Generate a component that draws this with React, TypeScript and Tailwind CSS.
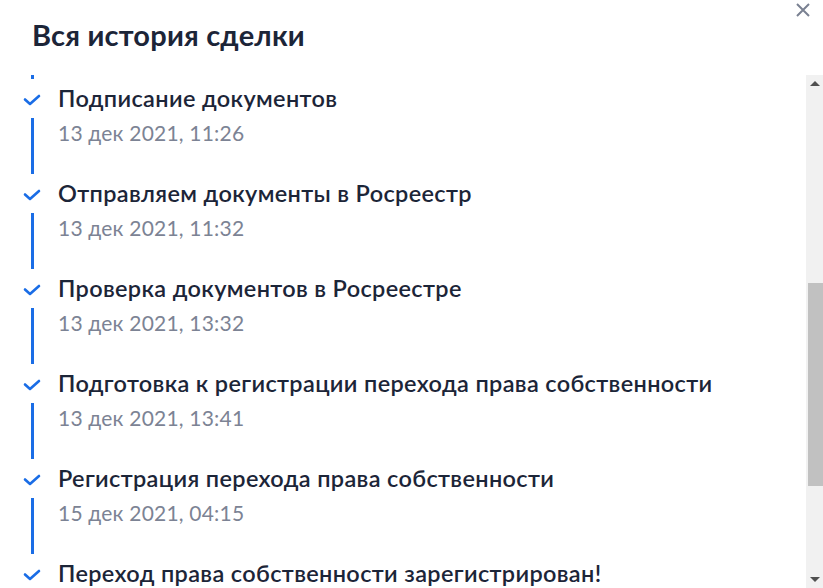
import React from "react";

const steps = [
  { title: "Подписание документов", date: "13 дек 2021, 11:26" },
  { title: "Отправляем документы в Росреестр", date: "13 дек 2021, 11:32" },
  { title: "Проверка документов в Росреестре", date: "13 дек 2021, 13:32" },
  { title: "Подготовка к регистрации перехода права собственности", date: "13 дек 2021, 13:41" },
  { title: "Регистрация перехода права собственности", date: "15 дек 2021, 04:15" },
  { title: "Переход права собственности зарегистрирован!", date: "15 дек 2021, 09:02" },
];

function Check() {
  return (
    <svg width="18" height="12" viewBox="0 0 18 12" fill="none">
      <path d="M2 5.5L7 10L16 2" stroke="#1a6de6" strokeWidth="2.6" strokeLinecap="round" strokeLinejoin="round" />
    </svg>
  );
}

export default function App() {
  return (
    <div className="relative w-[823px] h-[588px] bg-white overflow-hidden font-['Lato',sans-serif]">
      {/* close */}
      <button className="absolute left-[796px] top-[3px] w-[14px] h-[14px]">
        <svg width="14" height="14" viewBox="0 0 14 14">
          <path d="M1 1L13 13M13 1L1 13" stroke="#7a8192" strokeWidth="2" />
        </svg>
      </button>

      <h1 className="pl-[32px] pt-[16px] h-[75px] text-[29px] font-bold text-[#1c2538] leading-[38px] tracking-[0.2px]">
        Вся история сделки
      </h1>

      <div className="flex h-[513px]">
        {/* list */}
        <div className="flex-1 overflow-hidden">
          <div className="ml-[31px] w-[3px] h-[4px] bg-[#1a6de6]" />
          <div className="h-[7px]" />
          {steps.map((s, i) => (
            <div key={i} className="h-[95px]">
              <div className="flex items-center h-[24px]">
                <div className="w-[58px] flex justify-start pl-[23px] pt-[3px]">
                  <Check />
                </div>
                <span className="text-[23.5px] font-semibold text-[#1c2538] leading-[24px] tracking-[0.35px] whitespace-nowrap -mt-[1px]">{s.title}</span>
              </div>
              <div className="flex mt-[8px]">
                <div className="w-[58px]">
                  <div className="ml-[31px] w-[3px] h-[56px] bg-[#1a6de6]" />
                </div>
                <span className="text-[21px] text-[#7c8394] leading-[24px] mt-[3px] tracking-[0.2px]">{s.date}</span>
              </div>
            </div>
          ))}
        </div>

        {/* scrollbar */}
        <div className="w-[17px] bg-[#f1f1f1] flex flex-col items-center relative">
          <div className="h-[17px] w-full flex items-center justify-center">
            <div className="w-0 h-0 border-l-[5px] border-r-[5px] border-b-[5px] border-l-transparent border-r-transparent border-b-[#505050]" />
          </div>
          <div className="mt-[191px] ml-[2px] w-[15px] h-[203px] bg-[#c1c1c1]" />
          <div className="flex-1" />
          <div className="h-[17px] w-full flex items-center justify-center">
            <div className="w-0 h-0 border-l-[5px] border-r-[5px] border-t-[5px] border-l-transparent border-r-transparent border-t-[#505050]" />
          </div>
        </div>
      </div>
    </div>
  );
}
